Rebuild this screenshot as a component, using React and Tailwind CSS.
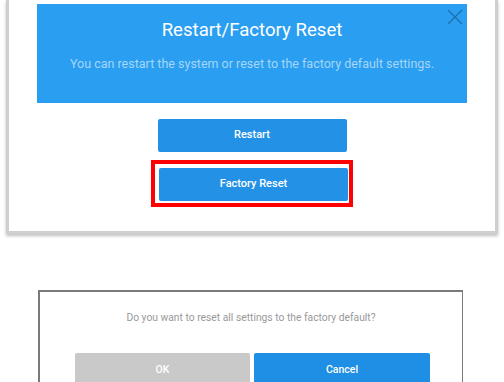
export default function App() {
  return (
    <div className="w-[504px] h-[382px] bg-white overflow-hidden flex flex-col font-['Roboto',sans-serif]">
      {/* Restart / Factory Reset card */}
      <div className="shrink-0 ml-[6px] w-[492px] h-[234px] bg-white border-x-[3px] border-b-[3px] border-[#cfcfcf] shadow-[0_2px_3px_rgba(0,0,0,0.25)] flex flex-col items-center">
        <div className="relative mt-[4px] w-[430px] h-[99px] bg-[#2a9ef1] flex flex-col items-center">
          <p className="mt-[15px] text-[18.6px] leading-[22px] text-white">Restart/Factory Reset</p>
          <p className="mt-[15px] text-[12.5px] leading-[16px] text-[#a6d6f8]">
            You can restart the system or reset to the factory default settings.
          </p>
          <svg className="absolute right-[4px] top-[5px]" width="16" height="16" viewBox="0 0 16 16" fill="none">
            <path d="M1 1L15 15M15 1L1 15" stroke="#1d6fae" strokeWidth="1.4" />
          </svg>
        </div>
        <button className="mt-[16px] w-[189px] h-[33px] rounded-[2px] bg-[#2392e6] text-white text-[11px] font-medium">
          Restart
        </button>
        <div className="mt-[8px] border-4 border-[#ff0000] pl-[4px] pr-[1px] pt-[4px] pb-[2px]">
          <button className="w-[189px] h-[33px] rounded-[2px] bg-[#2392e6] text-white text-[11px] font-medium">
            Factory Reset
          </button>
        </div>
      </div>

      {/* Confirmation dialog */}
      <div className="shrink-0 mt-[56px] ml-[38px] w-[425px] h-[120px] border-l-2 border-t-2 border-r border-[#7a7a7a] bg-white flex flex-col items-center">
        <p className="mt-[19px] text-[10.3px] leading-[14px] text-[#999999]">
          Do you want to reset all settings to the factory default?
        </p>
        <div className="mt-[28px] flex gap-[4px] ml-[3px]">
          <button className="w-[175px] h-[34px] rounded-[2px] bg-[#c9c9c9] text-white text-[10.5px] font-medium">OK</button>
          <button className="w-[176px] h-[34px] rounded-[2px] bg-[#1e8fe4] text-white text-[10.5px] font-medium">Cancel</button>
        </div>
      </div>
    </div>
  )
}
